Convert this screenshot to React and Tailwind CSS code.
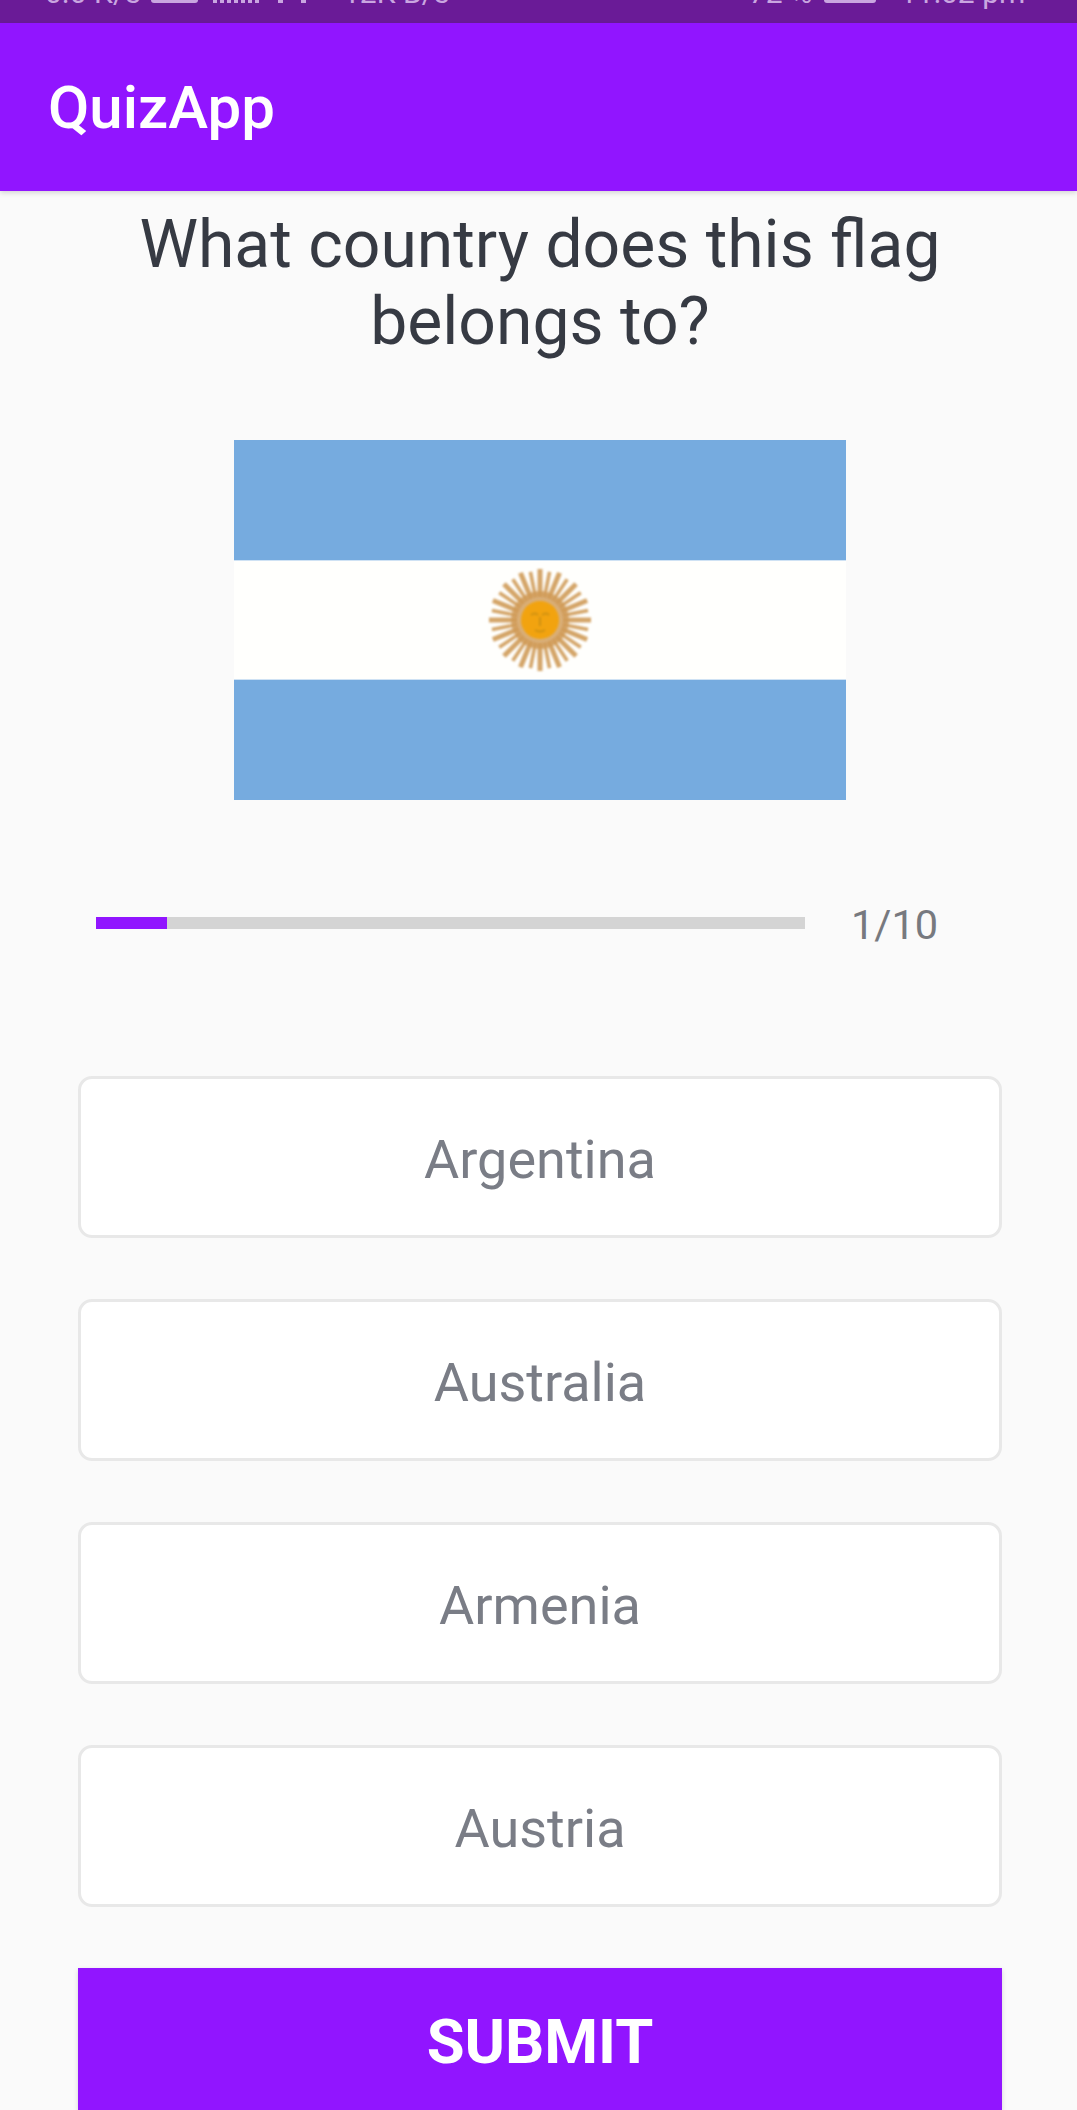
const rays = Array.from({ length: 32 }, (_, i) => i * 11.25);

function Sun() {
  return (
    <svg width="106" height="106" viewBox="0 0 106 106" className="blur-[1px]">
      {rays.map((a, i) => (
        <line key={a} x1="53" y1={i % 2 ? 4 : 2} x2="53" y2="30" stroke="#d4a568" strokeWidth={i % 2 ? 3.6 : 5} transform={`rotate(${a} 53 53)`} />
      ))}
      <circle cx="53" cy="53" r="29" fill="#cf9a55" fillOpacity="0.8" />
      <circle cx="53" cy="53" r="19" fill="#f2a30f" />
      <path d="M44 48q4-3 7 0M55 48q4-3 7 0M53 50v9M48 63q5 3 10 0" stroke="#cf9212" strokeWidth="2" fill="none" />
    </svg>
  );
}

function Option({ label }) {
  return (
    <div className="h-[162px] rounded-[14px] border-[3px] border-[#e8e8e8] bg-white flex items-center justify-center pt-[4px] text-[54px] text-[#7a7d86]">
      {label}
    </div>
  );
}

export default function App() {
  return (
    <div className="w-[1077px] h-[2110px] overflow-hidden bg-[#fafafa] font-['Roboto',sans-serif] flex flex-col">
      <div className="h-[23px] shrink-0 bg-[#6a1b97] overflow-hidden">
        <div className="-mt-[22px] h-[30px] flex items-end text-[30px] leading-[30px] text-[#c9a6e0] whitespace-nowrap">
          <span className="ml-[45px] w-[96px]">0.0 K/s</span>
          <div className="ml-[10px] w-[47px] h-[25px] rounded-[3px] bg-[#c9a6e0] self-start" />
          <div className="ml-[15px] w-[48px] h-[25px] self-start bg-[repeating-linear-gradient(90deg,#c9a6e0_0,#c9a6e0_4px,transparent_4px,transparent_7px)]" />
          <div className="ml-[17px] w-[5px] h-[25px] self-start bg-[#c9a6e0]" />
          <div className="ml-[18px] w-[5px] h-[25px] self-start bg-[#c9a6e0]" />
          <span className="ml-[37px] w-[406px]">12K B/s</span>
          <span className="w-[75px]">72 %</span>
          <div className="w-[52px] h-[25px] rounded-[3px] bg-[#c9a6e0] self-start" />
          <span className="ml-[24px]">11:02 pm</span>
        </div>
      </div>
      <header className="h-[168px] shrink-0 bg-[#9115ff] flex items-center pl-[48px] pt-[2px] text-[60px] font-medium text-white shadow-[0_2px_5px_rgba(0,0,0,0.15)]">
        QuizApp
      </header>
      <main className="flex-1 flex flex-col pl-[3px]">
        <h1 className="mt-[15px] mx-auto w-[900px] text-center text-[66px] leading-[77px] text-[#363a43]">
          What country does this flag belongs to?
        </h1>
        <div className="mt-[80px] mx-auto w-[612px] h-[360px] flex flex-col">
          <div className="h-[120px] bg-[#76abdf]" />
          <div className="h-[120px] bg-[#fffffd] flex items-center justify-center border-y-[1px] border-[#cfe2f4]">
            <Sun />
          </div>
          <div className="h-[120px] bg-[#76abdf]" />
        </div>
        <div className="mt-[98px] h-[50px] pl-[93px] flex items-center">
          <div className="w-[709px] h-[12px] bg-[#d4d4d4]">
            <div className="w-[71px] h-full bg-[#9115ff]" />
          </div>
          <span className="ml-[46px] pt-[3px] text-[41.5px] leading-[50px] text-[#77797f]">1/10</span>
        </div>
        <div className="mt-[128px] mx-[75px] flex flex-col gap-[61px]">
          <Option label="Argentina" />
          <Option label="Australia" />
          <Option label="Armenia" />
          <Option label="Austria" />
        </div>
        <button className="mt-[61px] mx-[75px] h-[142px] shrink-0 bg-[#9115ff] text-white text-[61.5px] font-bold pt-[6px] shadow-[0_2px_5px_rgba(0,0,0,0.15)]">
          SUBMIT
        </button>
      </main>
    </div>
  );
}
